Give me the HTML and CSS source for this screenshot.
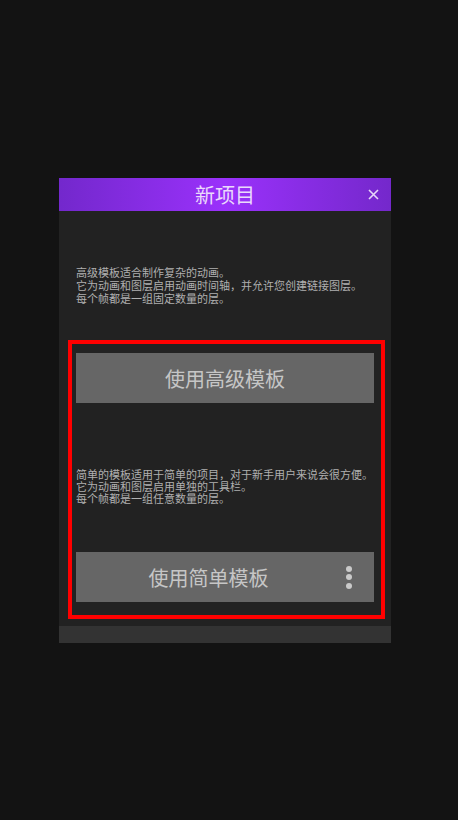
FILE: index.html
```html
<!DOCTYPE html>
<html lang="zh-CN">
<head>
<meta charset="utf-8">
<title>新项目</title>
<link rel="stylesheet" href="styles.css">
</head>
<body>
<div class="dialog">
  <div class="header">
    <span class="title">新项目</span>
    <span class="close">
      <svg width="11" height="11" viewBox="0 0 11 11"><path d="M1 1L10 10M10 1L1 10" stroke="#e6d6f8" stroke-width="1.6" fill="none"/></svg>
    </span>
  </div>
  <div class="body">
    <p class="desc desc-advanced">高级模板适合制作复杂的动画。<br>它为动画和图层启用动画时间轴，并允许您创建链接图层。<br>每个帧都是一组固定数量的层。</p>
    <div class="btn btn-advanced">使用高级模板</div>
    <p class="desc desc-simple">简单的模板适用于简单的项目，对于新手用户来说会很方便。<br>它为动画和图层启用单独的工具栏。<br>每个帧都是一组任意数量的层。</p>
    <div class="btn btn-simple">
      <span class="btn-label">使用简单模板</span>
      <span class="dots"><i></i><i></i><i></i></span>
    </div>
  </div>
  <div class="footer"></div>
</div>
<div class="highlight"></div>
</body>
</html>
```
FILE: styles.css
```css
html, body {
  margin: 0;
  padding: 0;
  background: #131313;
  height: 100%;
}
body {
  font-family: "Noto Sans CJK SC", "Noto Sans", sans-serif;
  position: relative;
  overflow: hidden;
}
.dialog {
  margin: 178px 0 0 59px;
  width: 332px;
  background: #222222;
}
.header {
  position: relative;
  height: 33px;
  display: flex;
  align-items: center;
  justify-content: center;
  background: linear-gradient(90deg, #7328cc 0%, #9a31fb 50%, #7428cb 100%);
}
.title {
  color: #ead9fb;
  font-size: 20px;
  line-height: 33px;
}
.close {
  position: absolute;
  right: 12px;
  top: 11px;
  width: 11px;
  height: 11px;
  display: flex;
}
.body {
  padding: 55px 17px 24px 17px;
}
.desc {
  margin: 0;
  color: #b0b0b0;
  font-size: 11px;
}
.desc-advanced {
  line-height: 13px;
}
.desc-simple {
  line-height: 12px;
  margin-top: 65px;
}
.btn {
  height: 50px;
  background: #666666;
  color: #c6c6c6;
  font-size: 20px;
  display: flex;
  align-items: center;
  justify-content: center;
  margin-top: 48px;
}
.btn-simple {
  justify-content: flex-start;
}
.btn-label {
  flex: 1;
  text-align: center;
}
.dots {
  width: 16px;
  margin-right: 17px;
  display: flex;
  flex-direction: column;
  align-items: center;
  gap: 2.5px;
}
.dots i {
  display: block;
  width: 6px;
  height: 6px;
  border-radius: 50%;
  background: #cacaca;
}
.footer {
  height: 17px;
  background: #333333;
}
.highlight {
  position: absolute;
  left: 68px;
  top: 340px;
  width: 317px;
  height: 279px;
  box-sizing: border-box;
  border: 4px solid #ff0000;
  pointer-events: none;
}
```
